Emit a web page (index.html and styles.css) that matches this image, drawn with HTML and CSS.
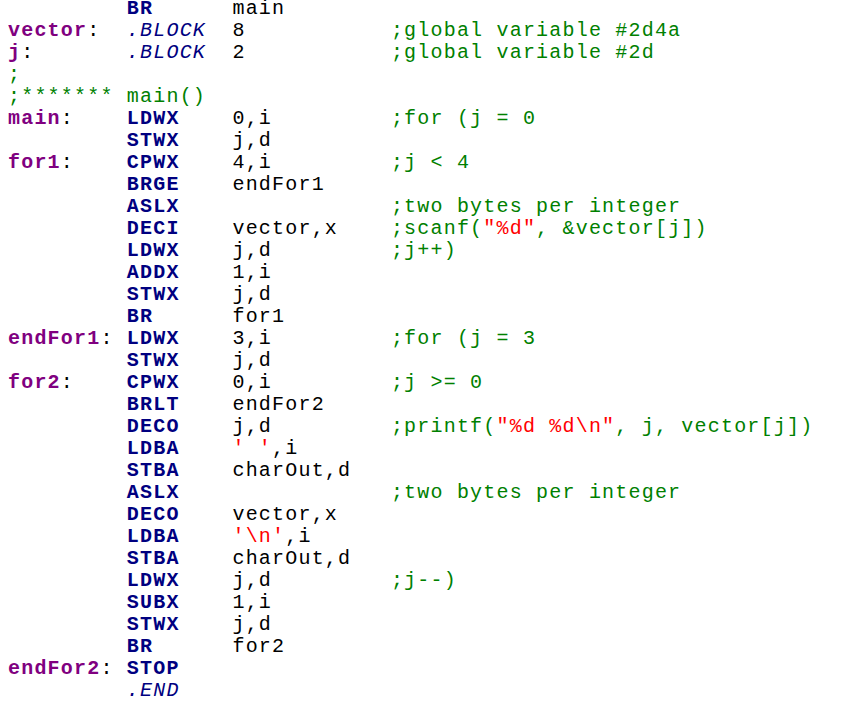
FILE: index.html
```html
<!DOCTYPE html>
<html>
<head>
<meta charset="utf-8">
<link rel="stylesheet" href="styles.css">
</head>
<body>
<div class="code">
<div class="ln">         <span class="m">BR</span>      main</div>
<div class="ln"><span class="l">vector</span>:  <span class="d">.BLOCK</span>  8           <span class="c">;global variable #2d4a</span></div>
<div class="ln"><span class="l">j</span>:       <span class="d">.BLOCK</span>  2           <span class="c">;global variable #2d</span></div>
<div class="ln"><span class="c">;</span></div>
<div class="ln"><span class="c">;******* main()</span></div>
<div class="ln"><span class="l">main</span>:    <span class="m">LDWX</span>    0,i         <span class="c">;for (j = 0</span></div>
<div class="ln">         <span class="m">STWX</span>    j,d</div>
<div class="ln"><span class="l">for1</span>:    <span class="m">CPWX</span>    4,i         <span class="c">;j &lt; 4</span></div>
<div class="ln">         <span class="m">BRGE</span>    endFor1</div>
<div class="ln">         <span class="m">ASLX</span>                <span class="c">;two bytes per integer</span></div>
<div class="ln">         <span class="m">DECI</span>    vector,x    <span class="c">;scanf(<span class="s">"%d"</span>, &amp;vector[j])</span></div>
<div class="ln">         <span class="m">LDWX</span>    j,d         <span class="c">;j++)</span></div>
<div class="ln">         <span class="m">ADDX</span>    1,i</div>
<div class="ln">         <span class="m">STWX</span>    j,d</div>
<div class="ln">         <span class="m">BR</span>      for1</div>
<div class="ln"><span class="l">endFor1</span>: <span class="m">LDWX</span>    3,i         <span class="c">;for (j = 3</span></div>
<div class="ln">         <span class="m">STWX</span>    j,d</div>
<div class="ln"><span class="l">for2</span>:    <span class="m">CPWX</span>    0,i         <span class="c">;j &gt;= 0</span></div>
<div class="ln">         <span class="m">BRLT</span>    endFor2</div>
<div class="ln">         <span class="m">DECO</span>    j,d         <span class="c">;printf(<span class="s">"%d %d\n"</span>, j, vector[j])</span></div>
<div class="ln">         <span class="m">LDBA</span>    <span class="s">' '</span>,i</div>
<div class="ln">         <span class="m">STBA</span>    charOut,d</div>
<div class="ln">         <span class="m">ASLX</span>                <span class="c">;two bytes per integer</span></div>
<div class="ln">         <span class="m">DECO</span>    vector,x</div>
<div class="ln">         <span class="m">LDBA</span>    <span class="s">'\n'</span>,i</div>
<div class="ln">         <span class="m">STBA</span>    charOut,d</div>
<div class="ln">         <span class="m">LDWX</span>    j,d         <span class="c">;j--)</span></div>
<div class="ln">         <span class="m">SUBX</span>    1,i</div>
<div class="ln">         <span class="m">STWX</span>    j,d</div>
<div class="ln">         <span class="m">BR</span>      for2</div>
<div class="ln"><span class="l">endFor2</span>: <span class="m">STOP</span></div>
<div class="ln">         <span class="d">.END</span></div>
</div>
</body>
</html>
```

FILE: styles.css
```css
html, body {
  background: #ffffff;
}
body {
  margin: 0 8px;
}
.code {
  font-family: "Liberation Mono", monospace;
  font-size: 20px;
  letter-spacing: 1.2px;
  color: #000000;
}
.ln {
  white-space: pre;
  height: 22px;
  line-height: 18px;
}
.l {
  color: #800080;
  font-weight: bold;
}
.m {
  color: #000080;
  font-weight: bold;
}
.d {
  color: #000080;
  font-style: italic;
}
.c {
  color: #008000;
}
.s {
  color: #ff0000;
}
```
